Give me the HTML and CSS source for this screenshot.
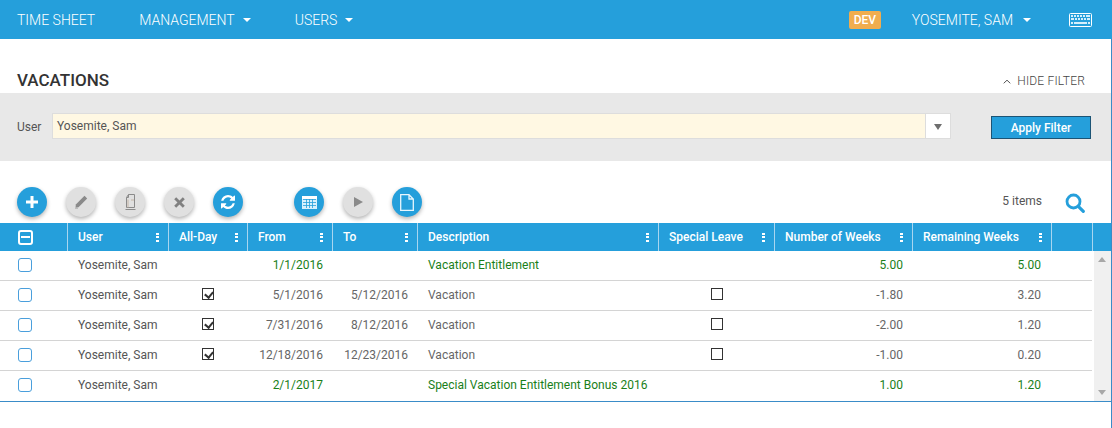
FILE: index.html
```html
<!DOCTYPE html>
<html lang="en">
<head>
<meta charset="utf-8">
<title>Vacations</title>
<link rel="stylesheet" href="styles.css">
</head>
<body>
<div class="page">
  <nav class="nav">
    <a class="nav-item">TIME SHEET</a>
    <a class="nav-item mgmt">MANAGEMENT<i class="caret"></i></a>
    <a class="nav-item users">USERS<i class="caret"></i></a>
    <span class="spacer"></span>
    <span class="badge">DEV</span>
    <a class="nav-item me">YOSEMITE, SAM<i class="caret"></i></a>
    <svg class="kbd" width="23" height="14" viewBox="0 0 23 14"><rect x="0.5" y="0.5" width="22" height="13" rx="1" fill="none" stroke="#fff"/><g fill="#d5effc"><rect x="2" y="2" width="2" height="2"/><rect x="5" y="2" width="2" height="2"/><rect x="8" y="2" width="2" height="2"/><rect x="11" y="2" width="2" height="2"/><rect x="14" y="2" width="2" height="2"/><rect x="17" y="2" width="4" height="2"/><rect x="2" y="5" width="3" height="2"/><rect x="6" y="5" width="2" height="2"/><rect x="9" y="5" width="2" height="2"/><rect x="12" y="5" width="2" height="2"/><rect x="15" y="5" width="2" height="2"/><rect x="18" y="5" width="3" height="2"/><rect x="2" y="9" width="2" height="2"/><rect x="5" y="9" width="13" height="2"/><rect x="19" y="9" width="2" height="2"/></g></svg>
  </nav>

  <header class="title-row">
    <h1 class="title">VACATIONS</h1>
    <a class="hide-filter"><svg class="chev" width="8" height="5" viewBox="0 0 8 5"><path d="M.7 4.300 4 1.200l3.300 3.100" fill="none" stroke="#555"/></svg>HIDE FILTER</a>
  </header>

  <section class="filter">
    <label class="filter-label">User</label>
    <div class="combo">
      <div class="combo-value">Yosemite, Sam</div>
      <div class="combo-btn"><i class="combo-caret"></i></div>
    </div>
    <button class="apply">Apply Filter</button>
  </section>

  <section class="toolbar">
    <button class="fab on"><svg width="12" height="12" viewBox="0 0 12 12"><path d="M4.500 0h3v4.500H12v3H7.500V12h-3V7.500H0v-3h4.500z" fill="#fff"/></svg></button>
    <button class="fab off"><svg width="14" height="14" viewBox="0 0 14 14"><path d="M10.500.8l2.700 2.700-8.700 8.700-3 .5.300-3.200z" fill="#8a8a8a"/><path d="M1 13.300h3" stroke="#b5b5b5"/></svg></button>
    <button class="fab off"><svg width="12" height="17" viewBox="0 0 12 17"><path d="M4.500.5h6v13h-8V3.500zM4.500.5v3h-2" fill="none" stroke="#8a8a8a"/><path d="M4 5.500v8M7 6h3" stroke="#c4b5a6" stroke-width="1"/><path d="M1.500 15.500h10" stroke="#8a8a8a"/></svg></button>
    <button class="fab off"><svg width="11" height="11" viewBox="0 0 11 11"><path d="M2.200.2 5.500 3.500 8.800.2l2 2L7.500 5.500l3.300 3.300-2 2L5.500 7.500l-3.300 3.300-2-2L3.500 5.500.2 2.200z" fill="#808080"/></svg></button>
    <button class="fab on"><svg width="14" height="14" viewBox="0 0 1536 1536"><path fill="#fff" d="M1511 928q0 5-1 7-64 268-268 434.500t-478 166.500q-146 0-282.500-55t-243.500-157l-129 129q-19 19-45 19t-45-19-19-45v-448q0-26 19-45t45-19h448q26 0 45 19t19 45-19 45l-137 137q71 66 161 102t187 36q134 0 250-65t186-179q11-17 53-117 8-23 30-23h192q13 0 22.500 9.500t9.500 22.500zm25-800v448q0 26-19 45t-45 19h-448q-26 0-45-19t-19-45 19-45l138-138q-148-137-349-137-134 0-250 65t-186 179q-11 17-53 117-8 23-30 23h-199q-13 0-22.500-9.500t-9.500-22.500v-7q65-268 270-434.500t480-166.500q146 0 284 55.500t245 156.500l130-129q19-19 45-19t45 19 19 45z"/></svg></button>
    <button class="fab on group"><svg width="15" height="13" viewBox="0 0 15 13"><path fill="#d8f0fc" d="M0 0h15v13H0z"/><path fill="#fff" d="M0 0h15v3H0z"/><path stroke="#259fdb" stroke-width=".8" d="M1 3.500h13M1 6.500h13M1 9.500h13M4.500 3v9M7.500 3v9M10.500 3v9"/></svg></button>
    <button class="fab off"><svg width="9" height="10" viewBox="0 0 9 10"><path d="M0 0l9 5-9 5z" fill="#8a8a8a"/></svg></button>
    <button class="fab on"><svg width="14" height="17" viewBox="0 0 14 17"><path d="M.7.700h8.300l4.300 4.300v11.300H.7zM9 .7V5h4.300" fill="none" stroke="#e8f6fd" stroke-width="1.300"/></svg></button>
    <span class="spacer"></span>
    <span class="count">5 items</span>
    <svg class="search" width="20" height="20" viewBox="0 0 20 20"><circle cx="8.500" cy="8.500" r="6.500" fill="none" stroke="#259fdb" stroke-width="2.800"/><path d="M13.300 13.300l5 5" stroke="#259fdb" stroke-width="3.200" stroke-linecap="round"/></svg>
  </section>

  <section class="grid">
    <div class="row head">
      <div class="hc first"><span class="box white"><i class="minus"></i></span></div>
      <div class="hc">User<i class="dots"></i></div>
      <div class="hc">All-Day<i class="dots"></i></div>
      <div class="hc">From<i class="dots"></i></div>
      <div class="hc">To<i class="dots"></i></div>
      <div class="hc">Description<i class="dots"></i></div>
      <div class="hc">Special Leave<i class="dots"></i></div>
      <div class="hc">Number of Weeks<i class="dots"></i></div>
      <div class="hc">Remaining Weeks<i class="dots"></i></div>
      <div class="hc"></div>
      <div class="hc last"></div>
    </div>
    <div class="body">
      <div class="rows">
        <div class="row item entitle">
          <div class="c first"><span class="box"></span></div>
          <div class="c user">Yosemite, Sam</div>
          <div class="c mid"></div>
          <div class="c num">1/1/2016</div>
          <div class="c num"></div>
          <div class="c">Vacation Entitlement</div>
          <div class="c mid"></div>
          <div class="c num">5.00</div>
          <div class="c num">5.00</div>
        </div>
        <div class="row item">
          <div class="c first"><span class="box"></span></div>
          <div class="c user">Yosemite, Sam</div>
          <div class="c mid"><span class="tick on"></span></div>
          <div class="c num">5/1/2016</div>
          <div class="c num">5/12/2016</div>
          <div class="c">Vacation</div>
          <div class="c mid"><span class="tick"></span></div>
          <div class="c num">-1.80</div>
          <div class="c num">3.20</div>
        </div>
        <div class="row item">
          <div class="c first"><span class="box"></span></div>
          <div class="c user">Yosemite, Sam</div>
          <div class="c mid"><span class="tick on"></span></div>
          <div class="c num">7/31/2016</div>
          <div class="c num">8/12/2016</div>
          <div class="c">Vacation</div>
          <div class="c mid"><span class="tick"></span></div>
          <div class="c num">-2.00</div>
          <div class="c num">1.20</div>
        </div>
        <div class="row item">
          <div class="c first"><span class="box"></span></div>
          <div class="c user">Yosemite, Sam</div>
          <div class="c mid"><span class="tick on"></span></div>
          <div class="c num">12/18/2016</div>
          <div class="c num">12/23/2016</div>
          <div class="c">Vacation</div>
          <div class="c mid"><span class="tick"></span></div>
          <div class="c num">-1.00</div>
          <div class="c num">0.20</div>
        </div>
        <div class="row item entitle final">
          <div class="c first"><span class="box"></span></div>
          <div class="c user">Yosemite, Sam</div>
          <div class="c mid"></div>
          <div class="c num">2/1/2017</div>
          <div class="c num"></div>
          <div class="c">Special Vacation Entitlement Bonus 2016</div>
          <div class="c mid"></div>
          <div class="c num">1.00</div>
          <div class="c num">1.20</div>
        </div>
      </div>
      <div class="scroll"><i class="up"></i><i class="down"></i></div>
    </div>
  </section>
</div>
</body>
</html>
```

FILE: styles.css
```css
* { box-sizing: border-box; }
html, body { margin: 0; padding: 0; background: #fff; }
body { font-family: Roboto, "Liberation Sans", sans-serif; font-size: 12px; color: #555; overflow: hidden; }
.page { width: 1112px; height: 428px; border-right: 1px solid #3a8cc8; display: flex; flex-direction: column; }
.spacer { flex: 1; }

.nav { height: 39px; margin-right: -1px; background: #259fdb; color: #fff; display: flex; align-items: center; padding-left: 17px; }
.nav-item { font-size: 14px; font-weight: 300; display: flex; align-items: center; color: #fff; }
.mgmt { margin-left: 44px; }
.users { margin-left: 44px; }
.me { margin-left: 31px; }
.caret { width: 0; height: 0; border-left: 4px solid transparent; border-right: 4px solid transparent; border-top: 4px solid #fff; margin-left: 8px; }
.me .caret { margin-left: 10px; }
.badge { width: 32px; height: 18px; background: #f0ad4e; border-radius: 2px; color: #fff; font-size: 12px; font-weight: 500; display: flex; align-items: center; justify-content: center; }
.kbd { margin-left: 38px; margin-right: 20px; }

.title-row { height: 54px; display: flex; align-items: flex-end; justify-content: space-between; padding: 0 26px 2px 17px; }
.title { margin: 0; font-size: 17px; font-weight: 500; color: #333; line-height: 22px; }
.hide-filter { font-size: 12px; font-weight: 300; letter-spacing: .2px; color: #444; line-height: 20px; display: flex; align-items: center; }
.chev { margin-right: 6px; }

.filter { height: 68px; background: #e8e8e8; display: flex; align-items: flex-start; padding: 20px 20px 0 17px; }
.filter-label { line-height: 28px; width: 35px; color: #555; }
.combo { width: 899px; height: 26px; display: flex; border: 1px solid #ddd; background: #fff; }
.combo-value { flex: 1; background: #fff8e3; padding-left: 4px; line-height: 25px; color: #555; border-right: 1px solid #ddd; }
.combo-btn { width: 24px; display: flex; align-items: center; justify-content: center; }
.combo-caret { width: 0; height: 0; border-left: 4px solid transparent; border-right: 4px solid transparent; border-top: 6px solid #6e6e6e; margin-top: 1px; }
.apply { margin-left: 40px; margin-top: 3px; width: 100px; height: 23px; padding: 0; background: #259fdb; border: 1px solid #1c5475; color: #fff; font: 500 12px Roboto, sans-serif; }

.toolbar { height: 62px; display: flex; align-items: center; padding: 26px 26px 6px 17px; gap: 19px; }
.fab { width: 30px; height: 30px; border-radius: 50%; border: 0; padding: 0; display: flex; align-items: center; justify-content: center; box-shadow: 0 2px 4px rgba(0,0,0,.3); }
.fab.on { background: #259fdb; }
.fab.off { background: #e0e0e0; }
.fab.group { margin-left: 32px; }
.count { color: #555; margin-right: 4px; margin-bottom: 2px; }
.search { margin-top: 2px; }

.grid { display: flex; flex-direction: column; border-bottom: 1px solid #3a8cc8; height: 179px; }
.row { display: grid; grid-template-columns: 68px 101px 79px 85px 85px 241px 116px 138px 139px; }
.row.head { grid-template-columns: 68px 101px 79px 85px 85px 241px 116px 138px 139px 41px 1fr; height: 28px; background: #259fdb; }
.hc { border-right: 1px solid #a9d6f0; color: #fff; font-weight: 500; display: flex; align-items: center; justify-content: space-between; padding: 0 9px 0 10px; }
.hc.last { border-right: 0; }
.hc.first { padding: 0 0 0 18px; justify-content: flex-start; }
.dots { width: 3px; height: 9px; margin-top: 1px; background: linear-gradient(#fff 0 2px, transparent 2px 3px, #fff 3px 5px, transparent 5px 7px, #fff 7px 9px); }

.body { display: flex; flex: 1; min-height: 0; }
.rows { width: 1092px; }
.row.item { height: 30px; border-bottom: 1px solid #d4d4d4; }
.row.item.final { border-bottom: 0; }
.c { display: flex; align-items: center; padding: 0 10px 2px; white-space: nowrap; color: #666; }
.c.first { padding: 0 0 2px 18px; }
.c.num { justify-content: flex-end; padding-right: 10px; }
.c.num:last-child { padding-right: 11px; }
.c.mid { justify-content: center; padding: 0 0 3px; }
.c.mid:nth-child(3) { padding-right: 1px; }
.entitle .c { color: #1a7f1a; }
.row.item .c.user { color: #555; }

.box { width: 14px; height: 14px; border: 1px solid #4a9fdc; border-radius: 3px; background: #fff; display: block; }
.box.white { width: 15px; height: 15px; background: transparent; border: 2px solid #fff; display: flex; align-items: center; justify-content: center; }
.minus { width: 9px; height: 2px; background: #fff; display: block; }
.tick { width: 12px; height: 12px; border: 1px solid #333; display: block; position: relative; }
.tick.on::after { content: ""; position: absolute; left: 3px; top: 1px; width: 4px; height: 6px; border: solid #333; border-width: 0 2px 2px 0; transform: rotate(40deg); }

.scroll { flex: 1; margin-left: 2px; background: #f0f0f0; position: relative; }
.up, .down { position: absolute; left: 4px; width: 0; height: 0; border-left: 4px solid transparent; border-right: 4px solid transparent; }
.up { top: 6px; border-bottom: 5px solid #a8a8a8; }
.down { bottom: 6px; border-top: 5px solid #a8a8a8; }
```
